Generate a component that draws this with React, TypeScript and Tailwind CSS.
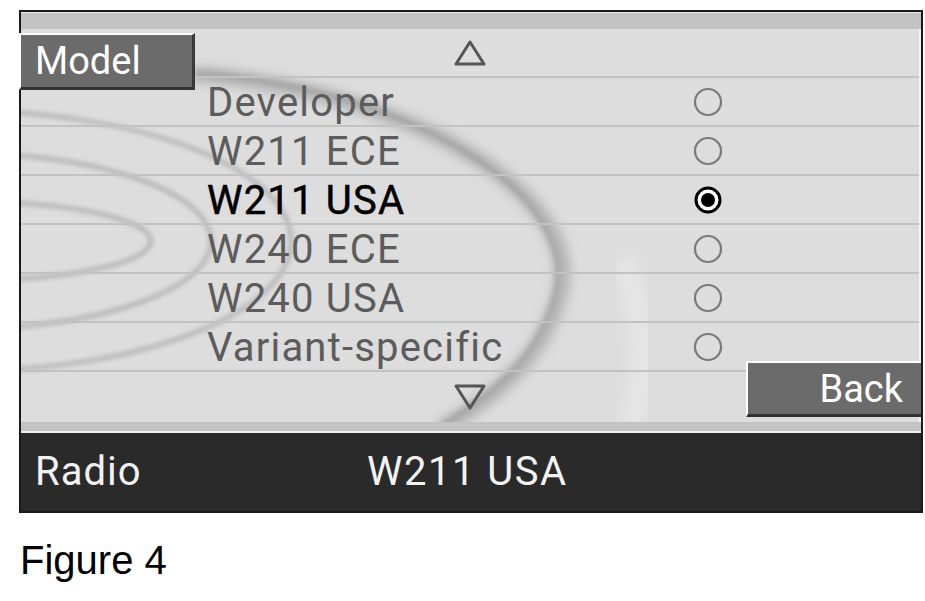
import React from 'react';

const items = [
  { label: 'Developer', selected: false },
  { label: 'W211 ECE', selected: false },
  { label: 'W211 USA', selected: true },
  { label: 'W240 ECE', selected: false },
  { label: 'W240 USA', selected: false },
  { label: 'Variant-specific', selected: false },
];

function Triangle({ down }: { down?: boolean }) {
  return (
    <svg width="34" height="28" viewBox="0 0 34 28" className="block">
      {down ? (
        <path d="M3 3 L31 3 L17 25 Z" fill="none" stroke="#555" strokeWidth="3" strokeLinejoin="round" />
      ) : (
        <path d="M17 3 L31 25 L3 25 Z" fill="none" stroke="#555" strokeWidth="3" strokeLinejoin="round" />
      )}
    </svg>
  );
}

function Radio({ on }: { on: boolean }) {
  if (on) {
    return (
      <svg width="30" height="30" viewBox="0 0 30 30" className="block">
        <circle cx="15" cy="15" r="12" fill="#fff" stroke="#000" strokeWidth="3" />
        <circle cx="15" cy="15" r="7" fill="#000" />
      </svg>
    );
  }
  return (
    <svg width="30" height="30" viewBox="0 0 30 30" className="block">
      <circle cx="15" cy="15" r="13" fill="none" stroke="#7a7a7a" strokeWidth="2.2" />
    </svg>
  );
}

// decorative swirl behind the list
function Swirl() {
  return (
    <svg className="absolute inset-0 pointer-events-none" width="897" height="393" viewBox="0 0 897 393">
      <defs>
        <filter id="blur" x="-20%" y="-20%" width="140%" height="140%">
          <feGaussianBlur stdDeviation="2.5" />
        </filter>
        <filter id="blur2" x="-20%" y="-20%" width="140%" height="140%">
          <feGaussianBlur stdDeviation="6" />
        </filter>
      </defs>
      <g filter="url(#blur)" fill="none" stroke="#8d8d8d" opacity="0.75">
        <ellipse cx="-60" cy="212" rx="330" ry="130" strokeWidth="3" />
        <ellipse cx="-60" cy="212" rx="250" ry="88" strokeWidth="3" />
        <ellipse cx="-60" cy="212" rx="190" ry="40" strokeWidth="3" />
      </g>
      <path
        d="M170 45 C 380 60, 560 160, 540 260 C 525 330, 470 370, 420 400"
        fill="none"
        stroke="#9a9a9a"
        strokeWidth="14"
        opacity="0.7"
        filter="url(#blur2)"
      />
      <path
        d="M175 44 C 380 58, 555 160, 535 260 C 520 330, 465 370, 415 400"
        fill="none"
        stroke="#8a8a8a"
        strokeWidth="4"
        opacity="0.5"
        filter="url(#blur)"
      />
      <path
        d="M600 230 C 630 300, 625 350, 610 400"
        fill="none"
        stroke="#ececec"
        strokeWidth="26"
        opacity="0.5"
        filter="url(#blur2)"
      />
    </svg>
  );
}

export default function App() {
  return (
    <div className="w-[925px] h-[601px] bg-white overflow-hidden">
      {/* screen */}
      <div className="ml-[19px] mt-[10px] w-[904px] border-2 border-[#1a1a1a] bg-[#dcdcdc]">
        {/* top band */}
        <div className="h-[17px] bg-[#c3c3c3] border-t border-[#e8e8e8]" />

        {/* list area */}
        <div className="relative h-[393px] bg-[#dddddd] border-r-2 border-[#f4f4f4]">
          <Swirl />
          <div className="relative flex flex-col">
            <div className="h-[49px] border-b-2 border-[#c2c2c2] flex items-center pl-[432px]">
              <Triangle />
            </div>
            {items.map((item) => (
              <div
                key={item.label}
                className="h-[49px] border-b-2 border-[#c2c2c2] flex items-center pl-[186px]"
              >
                <span
                  className={
                    item.selected
                      ? "w-[486px] font-['Roboto',sans-serif] text-[40px] leading-none tracking-[1.2px] text-black pt-[2px] [-webkit-text-stroke:0.5px_black]"
                      : "w-[486px] font-['Roboto',sans-serif] text-[40px] leading-none tracking-[1.2px] text-[#5c5c5c] pt-[2px]"
                  }
                >
                  {item.label}
                </span>
                <Radio on={item.selected} />
              </div>
            ))}
            <div className="h-[49px] flex items-center pl-[432px]">
              <Triangle down />
            </div>
          </div>

          {/* Model tab */}
          <div className="absolute left-[-2px] top-[4px] w-[176px] h-[57px] bg-[#6b6b6b] border-t-2 border-l-2 border-t-white border-l-white border-b-[3px] border-r-[3px] border-b-[#333] border-r-[#3a3a3a] flex items-center pl-[14px]">
            <span className="font-['Roboto',sans-serif] text-[38px] leading-none text-white">Model</span>
          </div>

          {/* Back button */}
          <div className="absolute right-[-2px] top-[332px] w-[175px] h-[56px] bg-[#6b6b6b] border-t-2 border-l-2 border-t-white border-l-white border-b-[3px] border-b-[#333] flex items-center justify-end pr-[18px]">
            <span className="font-['Roboto',sans-serif] text-[38px] leading-none text-white">Back</span>
          </div>
        </div>

        {/* bottom band */}
        <div className="h-[11px] bg-[#c3c3c3] border-b-2 border-[#f0f0f0]" />

        {/* status bar */}
        <div className="h-[78px] bg-[#2a2a2a] flex items-center">
          <div className="w-[346px] pl-[14px] font-['Roboto',sans-serif] text-[40px] leading-none tracking-[1px] text-[#f2f2f2]">
            Radio
          </div>
          <div className="font-['Roboto',sans-serif] text-[40px] leading-none tracking-[1.5px] text-[#f2f2f2]">
            W211 USA
          </div>
        </div>
      </div>

      <div className="ml-[20px] mt-[27px] font-['Liberation_Sans',Arial,sans-serif] text-[40px] leading-none text-black">
        Figure 4
      </div>
    </div>
  );
}
